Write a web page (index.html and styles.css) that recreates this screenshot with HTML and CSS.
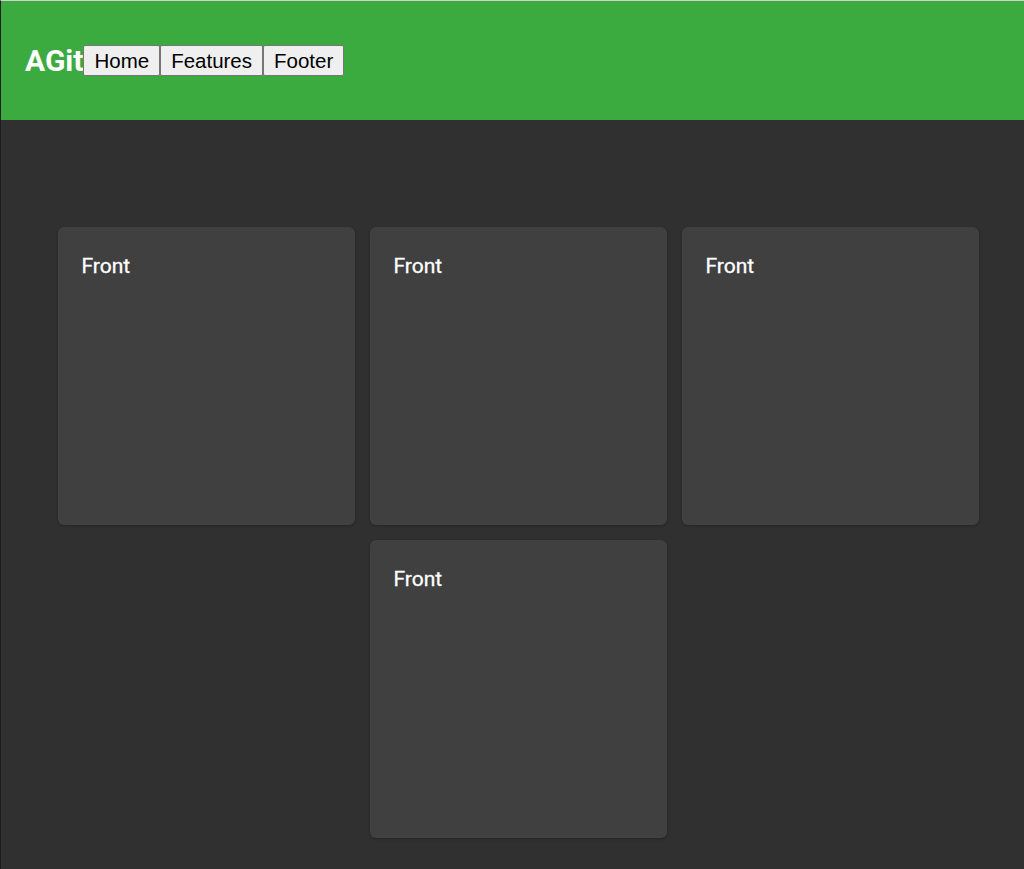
FILE: index.html
```html
<!DOCTYPE html>
<html>
<head>
<meta charset="utf-8">
<link rel="stylesheet" href="styles.css">
</head>
<body>
<div class="page">
  <header class="header">
    <span class="logo">AGit</span>
    <nav class="nav">
      <button class="nav-btn">Home</button>
      <button class="nav-btn">Features</button>
      <button class="nav-btn">Footer</button>
    </nav>
  </header>
  <main class="main">
    <div class="cards">
      <div class="card"><span class="card-title">Front</span></div>
      <div class="card"><span class="card-title">Front</span></div>
      <div class="card"><span class="card-title">Front</span></div>
      <div class="card"><span class="card-title">Front</span></div>
    </div>
  </main>
</div>
</body>
</html>
```

FILE: styles.css
```css
html, body {
  margin: 0;
  padding: 0;
  height: 100%;
  background: #303030;
}
.page {
  min-height: 868px;
  border-top: 1px solid #d0d0d0;
  border-left: 1px solid #1e1e1e;
  background: #303030;
  font-family: Roboto, "Liberation Sans", sans-serif;
}
.header {
  height: 119px;
  background: #3cab3f;
  display: flex;
  align-items: center;
  padding-left: 24px;
}
.logo {
  color: #ffffff;
  font-family: Roboto, sans-serif;
  font-weight: 700;
  font-size: 30px;
  line-height: 32px;
}
.nav {
  display: flex;
}
.nav-btn {
  font-family: "Liberation Sans", Arial, sans-serif;
  font-size: 20.5px;
  line-height: 23px;
  padding: 3px 10px;
  margin: 0;
  border: 1px solid #767676;
  border-radius: 2px;
  background: #efefef;
  color: #000;
}
.main {
  padding: 107px 45px 32px 56px;
}
.cards {
  display: flex;
  flex-wrap: wrap;
  justify-content: center;
  gap: 15px;
}
.card {
  width: 297px;
  height: 298px;
  box-sizing: border-box;
  background: #404040;
  border-radius: 6px;
  padding: 27px 24px;
  box-shadow: 0 1px 3px rgba(0,0,0,0.25);
}
.card-title {
  color: #ffffff;
  font-size: 21px;
  font-weight: 400;
  line-height: 25px;
  -webkit-text-stroke: 0.3px #ffffff;
}
```
